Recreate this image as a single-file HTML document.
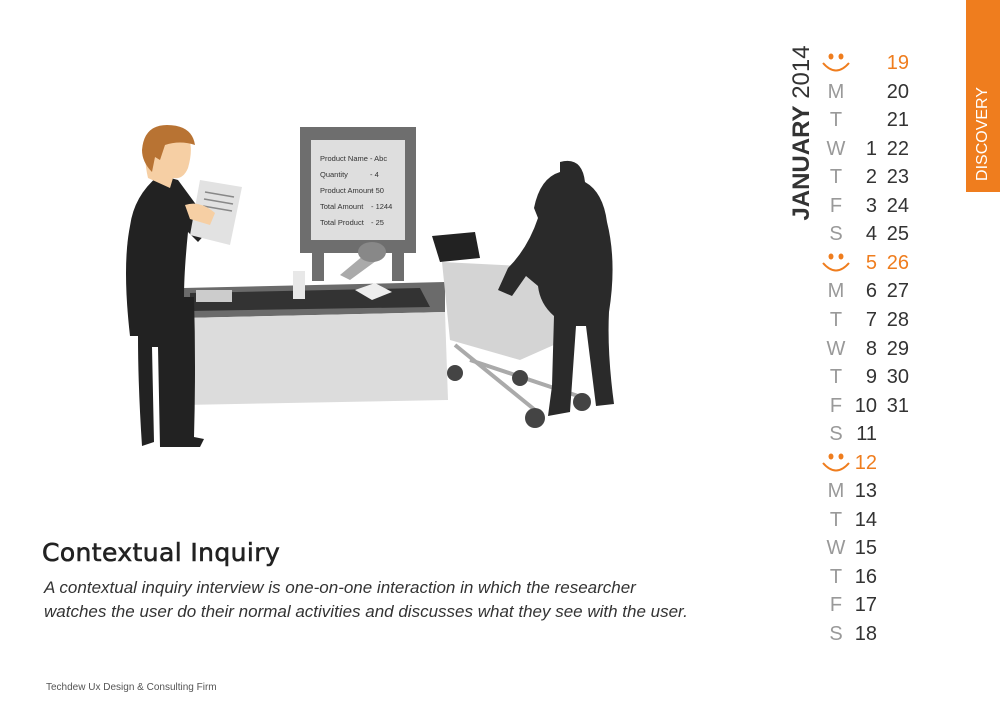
<!DOCTYPE html>
<html><head><meta charset="utf-8"><style>
body{margin:0;width:1000px;height:708px;background:#fff;position:relative;overflow:hidden;font-family:"Liberation Sans",sans-serif}
.abs{position:absolute}
.cal{position:absolute;font-size:20px;line-height:20px;color:#333}
.d{position:absolute;color:#999;width:30px;text-align:center}
.n1{position:absolute;width:40px;text-align:right}
.o{color:#ef7d1e}
</style></head><body>
<svg class="abs" style="left:0;top:0" width="1000" height="708">
<polygon points="183,288 445,282 445,312 183,318" fill="#6b6b6b"/>
<polygon points="183,318 445,312 448,400 183,405" fill="#dcdcdc"/>
<polygon points="190,293 420,288 430,307 190,311" fill="#333"/>
<rect x="300" y="127" width="116" height="126" fill="#6e6e6e"/>
<rect x="311" y="140" width="94" height="100" fill="#dedede"/>
<rect x="312" y="253" width="12" height="28" fill="#6e6e6e"/><rect x="392" y="253" width="12" height="28" fill="#6e6e6e"/>
<g font-size="7.5" fill="#333">
<text x="320" y="161">Product Name</text><text x="370" y="161">-  Abc</text>
<text x="320" y="177">Quantity</text><text x="370" y="177">-  4</text>
<text x="320" y="193">Product Amount</text><text x="371" y="193">-  50</text>
<text x="320" y="209">Total Amount</text><text x="371" y="209">-  1244</text>
<text x="320" y="225">Total Product</text><text x="371" y="225">-  25</text>
</g>
<polygon points="340,275 370,250 380,258 350,280" fill="#aaa"/>
<ellipse cx="372" cy="252" rx="14" ry="10" fill="#888"/>
<polygon points="355,290 375,283 392,292 372,300" fill="#eee"/>
<rect x="196" y="290" width="36" height="12" fill="#ccc"/>
<rect x="293" y="271" width="12" height="28" fill="#e8e8e8"/>
<polygon points="442,262 560,268 565,340 520,360 450,340" fill="#d4d4d4"/>
<polygon points="432,236 475,232 480,258 440,262" fill="#222"/>
<g stroke="#aaa" stroke-width="4" fill="none"><line x1="455" y1="345" x2="535" y2="410"/><line x1="470" y1="360" x2="590" y2="400"/></g>
<circle cx="455" cy="373" r="8" fill="#444"/><circle cx="520" cy="378" r="8" fill="#444"/><circle cx="535" cy="418" r="10" fill="#444"/><circle cx="582" cy="402" r="9" fill="#444"/>
<path d="M560,162 q22,-6 25,20 q18,10 22,40 q10,40 2,90 q-2,40 5,92 l-18,2 l-10,-80 l-10,0 l-6,86 l-22,4 l4,-30 l2,-70 q-14,-12 -16,-30 l-12,-10 l-14,20 l-14,-6 l10,-22 q20,-20 30,-50 l-4,-10 q6,-30 26,-36z" fill="#2a2a2a"/>
<path d="M148,172 l30,8 l22,30 l14,-5 l4,15 l-20,22 l-10,-10 q-4,40 -4,65 l10,0 q2,70 0,140 l10,2 l-4,8 l-40,0 l-2,-100 l-6,0 l2,95 l-12,4 q-4,-60 -4,-110 l-8,0 q-8,-70 0,-110 q4,-30 28,-50z" fill="#222"/>
<path d="M150,138 q15,-15 35,-5 q10,10 3,35 q-5,12 -15,10 l-3,10 l-22,-10 q-6,-25 2,-40z" fill="#f6cfa4"/>
<path d="M142,150 q2,-25 25,-25 q25,0 28,20 q-15,-5 -30,0 l-5,15 l-5,-3 l-3,15 q-10,-10 -10,-22z" fill="#b87333"/>
<polygon points="200,180 242,187 230,245 190,235" fill="#e2e2e2"/>
<g stroke="#888" stroke-width="1.5"><line x1="205" y1="192" x2="234" y2="197"/><line x1="204" y1="199" x2="233" y2="204"/><line x1="203" y1="206" x2="232" y2="211"/></g>
<path d="M185,205 q15,-5 30,8 l-5,12 l-20,-6z" fill="#f6cfa4"/>
</svg>
<div class="abs" style="left:42px;top:538px;font-size:25px;color:#222;font-family:'DejaVu Sans',sans-serif;-webkit-text-stroke:0.6px #222;letter-spacing:0.4px">Contextual Inquiry</div>
<div class="abs" style="left:44px;top:576px;font-size:17px;line-height:24px;color:#333;font-style:italic">A contextual inquiry interview is one-on-one interaction in which the researcher<br>watches the user do their normal activities and discusses what they see with the user.</div>
<div class="abs" style="left:46px;top:682px;font-size:10px;color:#555">Techdew Ux Design &amp; Consulting Firm</div>
<div class="abs" style="left:966px;top:0;width:34px;height:192px;background:#ef7d1e"></div>
<div class="abs" style="left:983px;top:134px;transform:translate(-50%,-50%) rotate(-90deg);color:#fff;font-size:16px;white-space:nowrap">DISCOVERY</div>
<div class="abs" style="left:802px;top:133px;transform:translate(-50%,-50%) rotate(-90deg);font-size:24px;color:#333;white-space:nowrap"><b>JANUARY</b> 2014</div>
<div id="cal"></div>
<script>
var rows=[["s","","19"],["M","","20"],["T","","21"],["W","1","22"],["T","2","23"],["F","3","24"],["S","4","25"],["s","5","26"],["M","6","27"],["T","7","28"],["W","8","29"],["T","9","30"],["F","10","31"],["S","11",""],["s","12",""],["M","13",""],["T","14",""],["W","15",""],["T","16",""],["F","17",""],["S","18",""]];
var h="";rows.forEach(function(r,i){var y=53+i*28.55;var sm=r[0]=="s";
if(sm)h+='<svg class="abs" style="left:820px;top:'+y+'px" width="32" height="26"><ellipse cx="11" cy="3.5" rx="2.5" ry="3" fill="#ef7d1e"/><ellipse cx="21" cy="3.5" rx="2.5" ry="3" fill="#ef7d1e"/><path d="M3,10 q13,15 26,0" stroke="#ef7d1e" stroke-width="2" fill="none"/></svg>';
else h+='<div class="cal d" style="left:821px;top:'+y+'px">'+r[0]+'</div>';
h+='<div class="cal n1'+(sm?' o':'')+'" style="left:837px;top:'+y+'px">'+r[1]+'</div>';
h+='<div class="cal n1'+(sm?' o':'')+'" style="left:869px;top:'+y+'px">'+r[2]+'</div>';});
document.getElementById("cal").innerHTML=h;
</script>
</body></html>
